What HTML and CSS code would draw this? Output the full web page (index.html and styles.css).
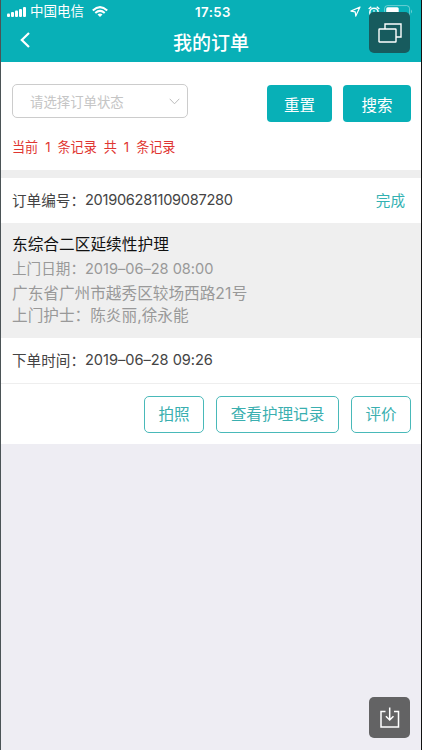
FILE: index.html
```html
<!DOCTYPE html>
<html lang="zh-CN">
<head>
<meta charset="utf-8">
<title>我的订单</title>
<link rel="stylesheet" href="styles.css">
</head>
<body>
<div class="screen">
  <header class="header">
    <div class="status">
      <svg class="signal" width="19" height="10" viewBox="0 0 19 10" fill="#fff"><rect x="0" y="6.5" width="3" height="3.5" rx="1"/><rect x="4" y="5" width="3" height="5" rx="1"/><rect x="8" y="3.5" width="3" height="6.5" rx="1"/><rect x="12" y="2" width="3" height="8" rx="1"/><rect x="16" y="0" width="3" height="10" rx="1"/></svg>
      <span class="carrier">中国电信</span>
      <svg class="wifi" width="16" height="11" viewBox="0 0 16 11" fill="none" stroke="#fff" stroke-width="2"><path d="M.8 4.4Q8-2.2 15.2 4.4M3.3 7Q8 2.8 12.7 7"/><path d="M5.5 8.5Q8 6.3 10.5 8.5L8 11Z" fill="#fff" stroke="none"/></svg>
      <time class="clock">17:53</time>
      <svg class="locate" width="11" height="11" viewBox="0 0 11 11" fill="none" stroke="#fff" stroke-width="1.2" stroke-linejoin="round"><path d="M10 1 .9 5.1l4.3.7.6 4.3Z"/></svg>
      <svg class="alarm" width="12" height="12" viewBox="0 0 12 12" fill="none" stroke="#fff"><circle cx="6" cy="6.5" r="4.2" stroke-width="1.5"/><path d="M.7 3 3.3.8M11.3 3 8.7.8" stroke-width="1.5"/><path d="M6 4v3h2"/></svg>
      <svg class="battery" width="29" height="13" viewBox="0 0 29 13"><rect x=".6" y=".6" width="25" height="11.8" rx="3" fill="none" stroke="#fff" stroke-opacity=".4"/><rect x="2.2" y="2.2" width="12.5" height="8.6" rx="1.5" fill="#fff"/><path d="M27 4.5q2 2 0 4Z" fill="#fff" fill-opacity=".4"/></svg>
    </div>
    <div class="navbar">
      <svg class="back" width="10" height="16" viewBox="0 0 10 16" fill="none" stroke="#fff" stroke-width="2.2"><path d="M9 1 1.8 8 9 15"/></svg>
      <h1>我的订单</h1>
    </div>
  </header>

  <section class="filter">
    <div class="controls">
      <div class="select"><span>请选择订单状态</span><svg width="11" height="7" viewBox="0 0 11 7" fill="none" stroke="#bbb"><path d="m.7.8 4.8 5 4.8-5"/></svg></div>
      <button class="primary reset">重置</button>
      <button class="primary search">搜索</button>
    </div>
    <p class="count">当前 1 条记录 共 1 条记录</p>
  </section>

  <article class="order">
    <div class="row number"><span>订单编号：</span><span class="digits">201906281109087280</span><span class="state">完成</span></div>
    <div class="detail">
      <h2>东综合二区延续性护理</h2>
      <p class="visit"><span>上门日期：</span><span class="date">2019–06–28 08:00</span></p>
      <p class="address">广东省广州市越秀区较场西路<span class="house">21</span>号</p>
      <p class="nurse">上门护士：<span>陈炎丽,徐永能</span></p>
    </div>
    <div class="row placed"><span>下单时间：</span><span class="date">2019–06–28 09:26</span></div>
    <div class="actions"><button>拍照</button><button class="wide">查看护理记录</button><button>评价</button></div>
  </article>

  <div class="float windows"><svg width="24" height="20" viewBox="0 0 24 20" fill="none" stroke="#fff" stroke-width="1.4"><path d="M7 6V1h16v13h-5"/><rect x="1" y="6" width="17" height="13" rx=".5"/></svg></div>
  <div class="float download"><svg width="20" height="21" viewBox="0 0 20 21" fill="none" stroke="#fff" stroke-width="1.5"><path d="M5.5 4.5H1V20h17.5V4.5H14M9.7.5V13M5.9 9.2l3.8 3.8 3.8-3.8"/></svg></div>
</div>
</body>
</html>
```
FILE: styles.css
```css
* { box-sizing: border-box; }
body { margin: 0; background: #eeedf3; font-family: Inter, "Noto Sans CJK SC", sans-serif; }
h1, h2, p { margin: 0; font-weight: 400; white-space: nowrap; }
button { padding: 0; font-family: inherit; white-space: nowrap; }
svg { display: block; flex: none; }
.screen { position: relative; width: 422px; height: 750px; overflow: hidden; border-left: 1px solid #4b5356; border-right: 1px solid #111; background: #eeedf3; }
.header { height: 62px; background: #08b0b7; color: #fff; }
.status { display: flex; height: 23px; padding-left: 6px; align-items: center; }
.carrier { margin-left: 4px; font-size: 13.5px; line-height: 18px; padding-bottom: 1px; white-space: nowrap; width: 54px; }
.wifi { margin-left: 8px; }
.clock { margin-left: 87px; width: 38px; font-size: 13.2px; font-weight: 600; letter-spacing: .45px; }
.locate { margin-left: 117px; }
.alarm { margin-left: 7px; }
.battery { margin-left: 4px; }
.navbar { display: flex; height: 39px; align-items: center; }
.back { margin-left: 19px; margin-top: -5px; }
h1 { margin-left: 143px; padding-top: 3px; font-size: 19px; line-height: 38px; font-weight: 500; }
.filter { height: 116px; padding: 22px 8px 0 11px; background: #fff; border-bottom: 8px solid #eee; }
.controls { display: flex; height: 40px; }
.select { display: flex; width: 176px; height: 34px; padding: 0 7px 0 17px; justify-content: space-between; align-items: center; border: 1px solid #ccc; border-radius: 5px; color: #c5c5c5; font-size: 13.4px; }
.primary { width: 65px; height: 37px; margin-top: 1px; padding-top: 4px; border: 0; border-radius: 4px; background: #08b0b7; color: #fff; font-size: 15.5px; line-height: 33px; }
.reset { margin-left: 79px; }
.search { width: 68px; margin-left: 11px; }
.count { margin-top: 12px; color: #df3632; font-size: 13.1px; line-height: 22px; word-spacing: 3.3px; }
.order { height: 266px; background: #fff; }
.row { display: flex; height: 45px; padding: 0 16px 2px 11px; align-items: center; color: #444; font-size: 14.6px; white-space: nowrap; }
.digits { letter-spacing: -.3px; }
.state { margin-left: auto; color: #32b1b2; }
.detail { height: 115px; padding: 10px 0 0 11px; background: #efefef; color: #999; }
h2 { height: 24px; color: #111; font-size: 15.7px; line-height: 24px; }
.visit { display: flex; height: 25px; font-size: 14.6px; line-height: 25px; }
.address, .nurse { height: 22px; font-size: 15.65px; line-height: 24px; }
.date { letter-spacing: -.03px; }
.house { letter-spacing: .2px; }
.placed { height: 46px; border-bottom: 1px solid #eee; }
.actions { display: flex; justify-content: flex-end; gap: 12px; padding: 12px 10px 0; }
.actions button { width: 60px; height: 37px; border: 1px solid #49b9b9; border-radius: 5px; background: #fff; color: #3aafb0; font-size: 15.6px; line-height: 35px; }
.actions .wide { width: 123px; }
.float { position: absolute; display: flex; justify-content: center; align-items: center; width: 41px; height: 41px; left: 368px; border-radius: 5px; }
.windows { top: 12px; background: #175b5e; }
.download { top: 697px; background: #636364; }
```
